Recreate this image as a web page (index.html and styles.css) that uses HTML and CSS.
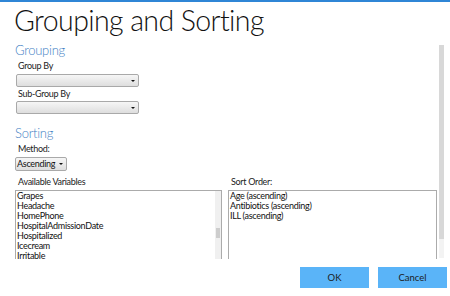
FILE: index.html
```html
<!DOCTYPE html>
<html>
<head>
<meta charset="utf-8">
<link rel="stylesheet" href="styles.css">
</head>
<body>
<div class="topline"></div>
<h1 class="title">Grouping and Sorting</h1>
<div class="scrollarea">
  <div class="content">
    <h2 class="section">Grouping</h2>
    <div class="label l-group">Group By</div>
    <div class="select wide s1"><span class="arrow"></span></div>
    <div class="label l-sub">Sub-Group By</div>
    <div class="select wide s2"><span class="arrow"></span></div>
    <h2 class="section sorting">Sorting</h2>
    <div class="label l-method">Method:</div>
    <div class="select method"><span class="seltext">Ascending</span><span class="arrow"></span></div>
    <div class="lists">
      <div class="listcol left">
        <div class="label listlabel">Available Variables</div>
        <div class="listbox">
          <div class="items">
            <div>Grapes</div>
            <div>Headache</div>
            <div>HomePhone</div>
            <div>HospitalAdmissionDate</div>
            <div>Hospitalized</div>
            <div>Icecream</div>
            <div>Irritable</div>
          </div>
          <div class="lscroll"><div class="lthumb"></div></div>
        </div>
      </div>
      <div class="listcol right">
        <div class="label listlabel">Sort Order:</div>
        <div class="listbox">
          <div class="items">
            <div>Age (ascending)</div>
            <div>Antibiotics (ascending)</div>
            <div>ILL (ascending)</div>
          </div>
        </div>
      </div>
    </div>
  </div>
  <div class="vscroll"><div class="vthumb"></div><div class="vtrack"></div></div>
</div>
<div class="footer">
  <button class="btn">OK</button>
  <button class="btn">Cancel</button>
</div>
</body>
</html>
```

FILE: styles.css
```css
html, body {
  margin: 0;
  padding: 0;
}
body {
  width: 450px;
  height: 296px;
  overflow: hidden;
  background: #fff;
  font-family: Lato, "Open Sans", sans-serif;
  color: #222;
  display: flex;
  flex-direction: column;
}
.topline {
  height: 2px;
  background: #2f86d6;
  flex: none;
}
.title {
  margin: 0;
  padding-left: 14px;
  height: 41px;
  font-size: 28.5px;
  font-weight: 300;
  letter-spacing: -0.6px;
  line-height: 37px;
  color: #111;
  flex: none;
}
.scrollarea {
  height: 216px;
  display: flex;
  flex: none;
}
.content {
  flex: 1;
  overflow: hidden;
  padding-left: 15px;
  padding-right: 2px;
}
.vscroll {
  width: 5px;
  margin-right: 6px;
  padding-top: 2px;
  padding-bottom: 1px;
  display: flex;
  flex-direction: column;
}
.vthumb {
  height: 194px;
  background: #d8d8d8;
}
.vtrack {
  flex: 1;
  background: #f3f3f3;
}
.section {
  margin: 0;
  font-size: 13px;
  font-weight: 300;
  letter-spacing: -0.25px;
  line-height: 14px;
  height: 14px;
  color: #3f7fc4;
}
.label {
  font-size: 9px;
  letter-spacing: -0.3px;
  line-height: 11px;
  height: 11px;
  color: #222;
  padding-left: 3px;
}
.l-group { margin-top: 3px; }
.l-sub { margin-top: 1px; }
.l-method { margin-top: 3px; }
.sorting { margin-top: 12px; }
.select {
  position: relative;
  box-sizing: border-box;
  height: 13px;
  border: 1px solid #a9a9a9;
  border-radius: 2px;
  background: linear-gradient(#f6f6f6, #dedede);
}
.wide {
  width: 123px;
  margin-left: 1px;
}
.s1 { margin-top: 3px; }
.s2 { margin-top: 2px; }
.method {
  width: 52px;
  margin-top: 3px;
  height: 14px;
  display: flex;
  align-items: center;
}
.seltext {
  font-size: 9px;
  letter-spacing: -0.3px;
  line-height: 12px;
  padding-left: 1px;
  color: #111;
}
.arrow {
  position: absolute;
  right: 3px;
  top: 50%;
  margin-top: -1px;
  width: 0;
  height: 0;
  border-left: 2px solid transparent;
  border-right: 2px solid transparent;
  border-top: 2px solid #111;
}
.lists {
  display: flex;
  gap: 6px;
  margin-top: 5px;
}
.listcol.left { width: 207px; }
.listcol.right { width: 209px; }
.listlabel { margin-bottom: 3px; }
.listbox {
  box-sizing: border-box;
  height: 100px;
  border: 1px solid #ababab;
  background: #fff;
  display: flex;
}
.items {
  flex: 1;
  font-size: 9px;
  letter-spacing: -0.3px;
  line-height: 10px;
  padding-left: 1px;
  color: #111;
}
.lscroll {
  width: 6px;
  background: #f0f0f0;
  display: flex;
  flex-direction: column;
  padding-top: 37px;
}
.lthumb {
  height: 10px;
  background: #cdcdcd;
  margin: 0 1px;
}
.footer {
  flex: 1;
  display: flex;
  justify-content: flex-end;
  align-items: flex-start;
  gap: 9px;
  padding-top: 8px;
  padding-right: 3px;
}
.btn {
  width: 69px;
  height: 21px;
  border: none;
  background: #5ab4f8;
  font-family: Lato, "Open Sans", sans-serif;
  font-size: 9.5px;
  color: #1c1c1c;
  padding: 0;
}
```
